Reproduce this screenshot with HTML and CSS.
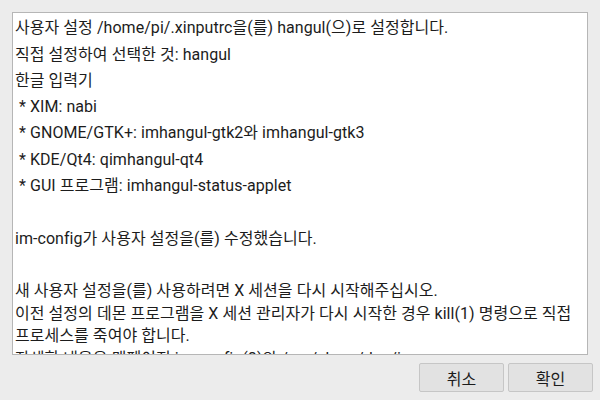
FILE: index.html
```html
<!DOCTYPE html>
<html lang="ko">
<head>
  <meta charset="UTF-8">
  <meta name="viewport" content="width=device-width, initial-scale=1.0">
  <title>im-config</title>
  <link rel="stylesheet" href="styles.css">
</head>
<body>
  <div class="dialog">
    <div class="message">
      <p>사용자 설정 /home/pi/.xinputrc을(를) hangul(으)로 설정합니다.</p>
      <p>직접 설정하여 선택한 것: hangul</p>
      <p>한글 입력기</p>
      <p>&nbsp;* XIM: nabi</p>
      <p>&nbsp;* GNOME/GTK+: imhangul-gtk2와 imhangul-gtk3</p>
      <p>&nbsp;* KDE/Qt4: qimhangul-qt4</p>
      <p>&nbsp;* GUI 프로그램: imhangul-status-applet</p>
      <p>&nbsp;</p>
      <p>im-config가 사용자 설정을(를) 수정했습니다.</p>
      <p>&nbsp;</p>
      <p>새 사용자 설정을(를) 사용하려면 X 세션을 다시 시작해주십시오.</p>
      <p class="tight">이전 설정의 데몬 프로그램을 X 세션 관리자가 다시 시작한 경우 kill(1) 명령으로 직접 프로세스를 죽여야 합니다.</p>
      <p class="tight">자세한 내용은 맨페이지 im-config(8)와 /usr/share/doc/im-config/README.Debian 파일을 참고하십시오.</p>
    </div>

    <div class="actions">
      <button type="button">취소</button>
      <button type="button">확인</button>
    </div>
  </div>
</body>
</html>
```

FILE: styles.css
```css
/* Fenêtre de dialogue */
body {
  margin: 0;
  padding: 0;
  background-color: #ececec;
  color: #1c1c1c;
  font-family: Roboto, "Noto Sans CJK KR", sans-serif;
  font-size: 16px;
}

.dialog {
  height: 400px;
  padding: 12px 7px 8px 12px;
  box-sizing: border-box;
  display: flex;
  flex-direction: column;
}

.message {
  width: 576px;
  height: 344px;
  box-sizing: border-box;
  background: #fff;
  border: 1px solid #b6b6b6;
  padding: 0 8px 0 2px;
  overflow: hidden;
}

.message p {
  margin: 3.3px 0 0;
  line-height: 23px;
  letter-spacing: 0.05px;
}

.message p.tight {
  margin-top: 1px;
  line-height: 22px;
}

.actions {
  display: flex;
  justify-content: flex-end;
  gap: 4px;
  margin-top: 8px;
}

button {
  width: 85px;
  height: 29px;
  background-color: #e2e2e2;
  color: #1c1c1c;
  border: 1px solid #c6c6c6;
  border-radius: 2px;
  font-family: inherit;
  font-size: 16px;
  padding: 0;
}
```
